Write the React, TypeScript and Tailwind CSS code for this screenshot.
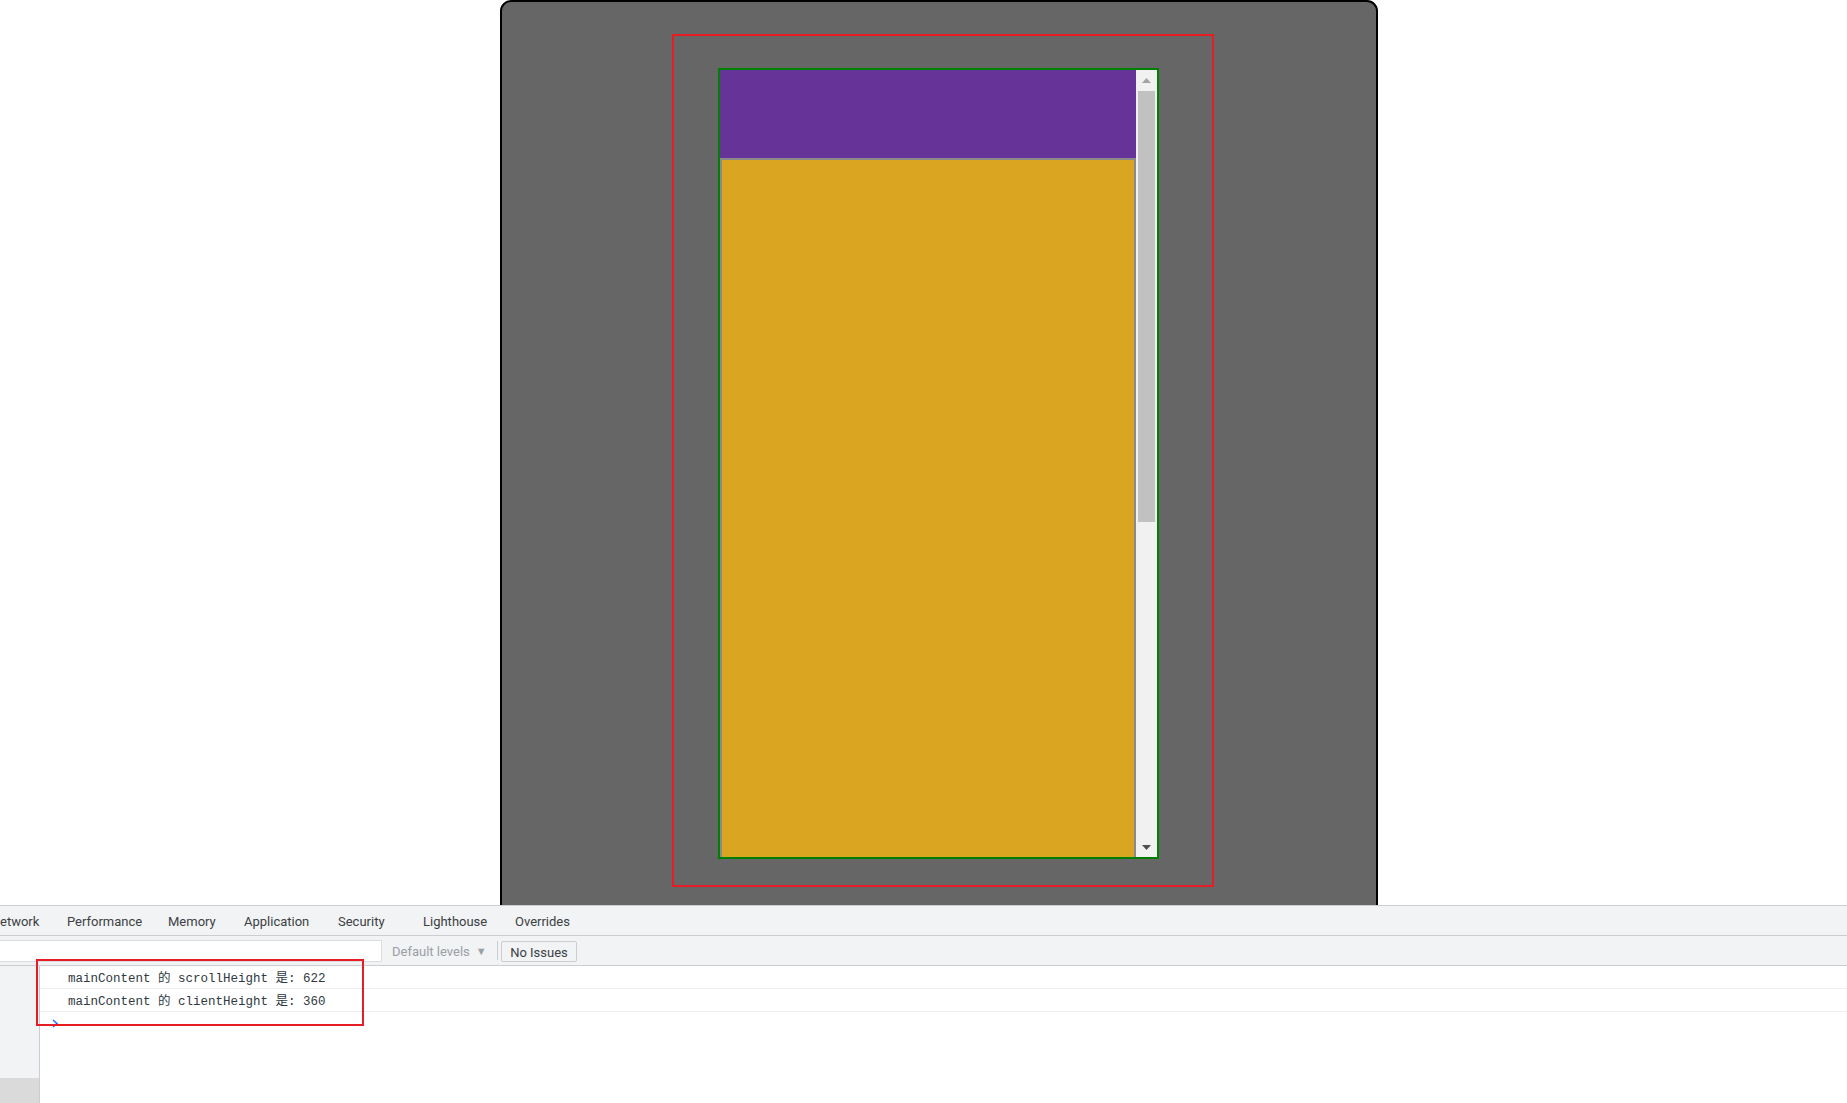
const tabs = [
  { label: 'etwork', w: 'w-[67px]' },
  { label: 'Performance', w: 'w-[101px]' },
  { label: 'Memory', w: 'w-[76px]' },
  { label: 'Application', w: 'w-[94px]' },
  { label: 'Security', w: 'w-[85px]' },
  { label: 'Lighthouse', w: 'w-[92px]' },
  { label: 'Overrides', w: 'w-[90px]' },
];

const logs = [
  'mainContent 的 scrollHeight 是: 622',
  'mainContent 的 clientHeight 是: 360',
];

const FakeScrollbar = () => (
  <div className="flex h-full w-[21px] shrink-0 flex-col bg-[#f1f1f1]">
    <div className="flex h-[20px] items-center justify-center">
      <svg width="9" height="5" viewBox="0 0 9 5">
        <path d="M0 5 L4.5 0 L9 5 Z" fill="#a3a3a3" />
      </svg>
    </div>
    <div className="mx-[2px] mt-[1px] h-[431px] bg-[#c1c1c1]" />
    <div className="flex-1" />
    <div className="flex h-[20px] items-center justify-center">
      <svg width="9" height="5" viewBox="0 0 9 5">
        <path d="M0 0 L9 0 L4.5 5 Z" fill="#505050" />
      </svg>
    </div>
  </div>
);

const DeviceView = () => (
  <div className="h-[905px] overflow-hidden bg-white">
    <div className="ml-[500px] h-[940px] w-[878px] rounded-t-[11px] border-2 border-black bg-[#666666] pt-[32px] pl-[170px]">
      <div className="h-[853px] w-[542px] border-2 border-[#e81c24] pt-[32px] pl-[44px]">
        <div className="flex h-[791px] w-[441px] border-2 border-[#008000]">
          <div className="flex-1 overflow-hidden">
            <div className="h-[88px] bg-[#663399]" />
            <div className="h-[900px] border-2 border-[#8a8a8a] bg-[#daa520]" />
          </div>
          <FakeScrollbar />
        </div>
      </div>
    </div>
  </div>
);

const DevTools = () => (
  <div
    className="relative flex-1 border-t border-[#cacdd1] text-[13px] text-[#3c4043]"
    style={{ fontFamily: 'Roboto, "Noto Sans", sans-serif' }}
  >
    <div className="flex h-[30px] items-center border-b border-[#cacdd1] bg-[#f1f3f4] pt-[2px]">
      {tabs.map((t) => (
        <div key={t.label} className={`${t.w} shrink-0 whitespace-nowrap`}>
          {t.label}
        </div>
      ))}
    </div>

    <div className="flex h-[30px] items-center border-b border-[#cacdd1] bg-[#f1f3f4]">
      <div className="h-[22px] w-[382px] border border-l-0 border-[#dadce0] bg-white" />
      <div className="mt-[3px] ml-[10px] flex w-[105px] items-center gap-[6px] text-[#9aa0a6]">
        <span>Default levels</span>
        <span className="text-[11px]">▼</span>
      </div>
      <div className="h-[19px] w-px bg-[#cacdd1]" />
      <button className="mt-[2px] ml-[3px] h-[21px] w-[76px] rounded-[2px] border border-[#cacdd1] bg-[#f1f3f4] pt-[1px] text-[13px] text-[#3c4043]">
        No Issues
      </button>
    </div>

    <div className="flex h-[137px]">
      <div className="flex w-[40px] shrink-0 flex-col border-r border-[#cacdd1] bg-[#f1f3f4]">
        <div className="flex-1" />
        <div className="h-[25px] bg-[#dadada]" />
      </div>
      <div
        className="flex-1 text-[12.5px] text-[#303942]"
        style={{ fontFamily: '"Liberation Mono", "Noto Sans CJK SC", monospace' }}
      >
        {logs.map((line) => (
          <div key={line} className="flex h-[23px] items-center border-b border-[#eeeeee] pl-[28px] whitespace-pre">
            <span className="mt-[5px]">{line}</span>
          </div>
        ))}
        <div className="flex h-[20px] items-center pl-[12px] pt-[2px]">
          <svg width="7" height="9" viewBox="0 0 7 9">
            <path d="M1 1 L5 4.5 L1 8" fill="none" stroke="#1a73e8" strokeWidth="1.5" />
          </svg>
        </div>
      </div>
    </div>

    {/* annotation box over the log lines */}
    <div className="absolute top-[53px] left-[36px] h-[67px] w-[328px] border-2 border-[#e81c24]" />
  </div>
);

export default function App() {
  return (
    <div className="flex h-[1103px] w-[1847px] flex-col overflow-hidden bg-white">
      <DeviceView />
      <DevTools />
    </div>
  );
}
